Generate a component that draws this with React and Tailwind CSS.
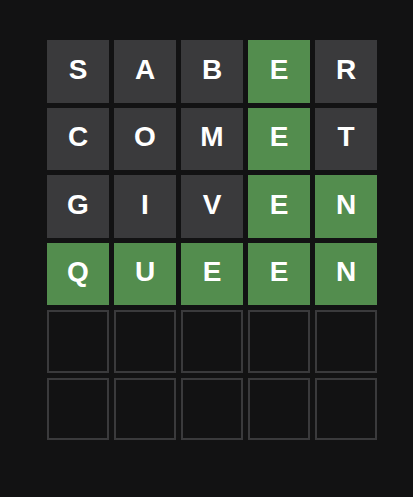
import React from 'react';

const ROWS = [
  { word: 'SABER', marks: 'xxxgx' },
  { word: 'COMET', marks: 'xxxgx' },
  { word: 'GIVEN', marks: 'xxxgg' },
  { word: 'QUEEN', marks: 'ggggg' },
  { word: '', marks: '' },
  { word: '', marks: '' },
];

function Tile({ letter, mark }) {
  if (!letter) return <div className="border-2 border-[#3a3a3c]" />;
  const bg = mark === 'g' ? 'bg-[#538d4e]' : 'bg-[#3a3a3c]';
  return (
    <div className={`${bg} flex items-center justify-center text-white text-[28px] font-bold leading-none pb-[3px]`}>
      {letter}
    </div>
  );
}

export default function App() {
  return (
    <div className="w-[413px] h-[497px] bg-[#121213] pt-[40px] pl-[47px]" style={{ fontFamily: '"Liberation Sans", Arial, sans-serif' }}>
      <div className="w-[330px] h-[400px] grid grid-cols-5 grid-rows-6 gap-[5px]">
        {ROWS.flatMap((row, r) =>
          Array.from({ length: 5 }, (_, c) => (
            <Tile key={`${r}-${c}`} letter={row.word[c]} mark={row.marks[c]} />
          ))
        )}
      </div>
    </div>
  );
}
